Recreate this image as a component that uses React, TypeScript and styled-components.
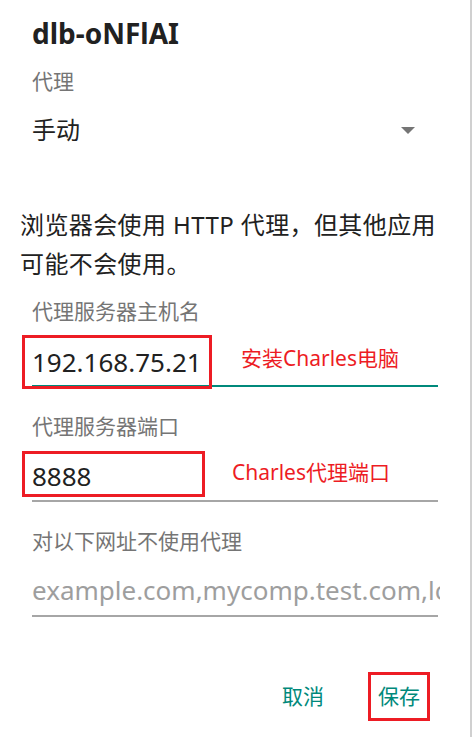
import styled, { createGlobalStyle } from "styled-components";

const colors = {
  ink: "#212121",
  muted: "#757575",
  hint: "#9e9e9e",
  teal: "#00897b",
  red: "#ed1c24",
  line: "#a6a6a6",
  edge: "#d0d0d0",
};

const GlobalStyle = createGlobalStyle`
  html, body {
    margin: 0;
    padding: 0;
    background: #fff;
  }
  body {
    font-family: "Noto Sans", "Noto Sans CJK SC", sans-serif;
  }
`;

interface IField {
  label: string;
  value: string;
  note?: string;
  noteX: number;
  focused?: boolean;
  placeholder?: boolean;
  marker?: { top: number; left: number; width: number; height: number };
  gap: number;
  top: number;
  pad: number;
}

const fields: IField[] = [
  {
    label: "代理服务器主机名",
    value: "192.168.75.21",
    note: "安装Charles电脑",
    noteX: 209,
    focused: true,
    marker: { top: -7, left: -10, width: 190, height: 54 },
    gap: 13,
    top: 16,
    pad: 3,
  },
  {
    label: "代理服务器端口",
    value: "8888",
    note: "Charles代理端口",
    noteX: 200,
    marker: { top: -5, left: -10, width: 183, height: 46 },
    gap: 24,
    top: 15,
    pad: 4,
  },
  {
    label: "对以下网址不使用代理",
    value: "example.com,mycomp.test.com,localhost",
    noteX: 408,
    placeholder: true,
    gap: 24,
    top: 14,
    pad: 5,
  },
];

function ArrowDown() {
  return (
    <svg width="14" height="7" viewBox="0 0 14 7">
      <polygon points="0,0 14,0 7,7" fill={colors.muted} />
    </svg>
  );
}

export default function App() {
  return (
    <>
      <GlobalStyle />
      <Dialog>
        <Title>dlb-oNFlAI</Title>
        <FieldLabel $gap={14}>代理</FieldLabel>
        <Select>
          <span>手动</span>
          <ArrowDown />
        </Select>
        <Paragraph>浏览器会使用 HTTP 代理，但其他应用可能不会使用。</Paragraph>
        {fields.map((f) => (
          <div key={f.label}>
            <FieldLabel $gap={f.gap}>{f.label}</FieldLabel>
            <Field $focused={!!f.focused} $noteX={f.noteX} $gap={f.top} $pad={f.pad}>
              <Value $placeholder={!!f.placeholder}>{f.value}</Value>
              {f.note && <Note>{f.note}</Note>}
              {f.marker && (
                <Marker
                  style={{
                    top: f.marker.top,
                    left: f.marker.left,
                    width: f.marker.width,
                    height: f.marker.height,
                  }}
                />
              )}
            </Field>
          </div>
        ))}
        <Actions>
          <ActionButton>取消</ActionButton>
          <ActionButton $marked>保存</ActionButton>
        </Actions>
      </Dialog>
    </>
  );
}

const Dialog = styled.div`
  width: 472px;
  height: 737px;
  box-sizing: border-box;
  border-right: 2px solid ${colors.edge};
  background: #fff;
  overflow: hidden;
  display: flex;
  flex-direction: column;
`;

const Title = styled.div`
  margin: 14px 0 0 32px;
  font-size: 28px;
  font-weight: 700;
  line-height: 38px;
  color: ${colors.ink};
`;

const FieldLabel = styled.div<{ $gap: number }>`
  margin-top: ${(p) => p.$gap}px;
  padding-left: 32px;
  font-size: 21px;
  line-height: 30px;
  color: ${colors.muted};
`;

const Select = styled.div`
  margin-top: 16px;
  height: 36px;
  display: flex;
  align-items: center;
  justify-content: space-between;
  padding: 0 55px 0 32px;
  font-size: 24px;
  line-height: 36px;
  color: ${colors.ink};
`;

const Paragraph = styled.p`
  margin: 57px 0 0 20px;
  width: 440px;
  font-size: 24px;
  line-height: 39px;
  letter-spacing: 0.4px;
  color: ${colors.ink};
`;

const Field = styled.div<{ $focused: boolean; $noteX: number; $gap: number; $pad: number }>`
  position: relative;
  margin: ${(p) => p.$gap}px 32px 0;
  padding-bottom: ${(p) => p.$pad}px;
  border-bottom: 2px solid ${(p) => (p.$focused ? colors.teal : colors.line)};
  display: grid;
  grid-template-columns: ${(p) => p.$noteX}px 1fr;
  align-items: center;
`;

const Value = styled.div<{ $placeholder: boolean }>`
  font-size: 26px;
  line-height: 40px;
  white-space: nowrap;
  overflow: ${(p) => (p.$placeholder ? "hidden" : "visible")};
  color: ${(p) => (p.$placeholder ? colors.hint : colors.ink)};
`;

const Note = styled.div`
  margin-bottom: 8px;
  font-size: 21px;
  line-height: 30px;
  white-space: nowrap;
  color: ${colors.red};
`;

const Marker = styled.div`
  position: absolute;
  box-sizing: border-box;
  border: 3px solid ${colors.red};
  pointer-events: none;
`;

const Actions = styled.div`
  margin-top: 55px;
  display: flex;
  justify-content: flex-end;
  align-items: center;
  gap: 34px;
  padding-right: 40px;
`;

const ActionButton = styled.button<{ $marked?: boolean }>`
  height: 49px;
  box-sizing: border-box;
  padding: 0 7px;
  border: 3px solid ${(p) => (p.$marked ? colors.red : "transparent")};
  background: none;
  font-family: inherit;
  font-size: 21px;
  line-height: 43px;
  color: ${colors.teal};
`;
